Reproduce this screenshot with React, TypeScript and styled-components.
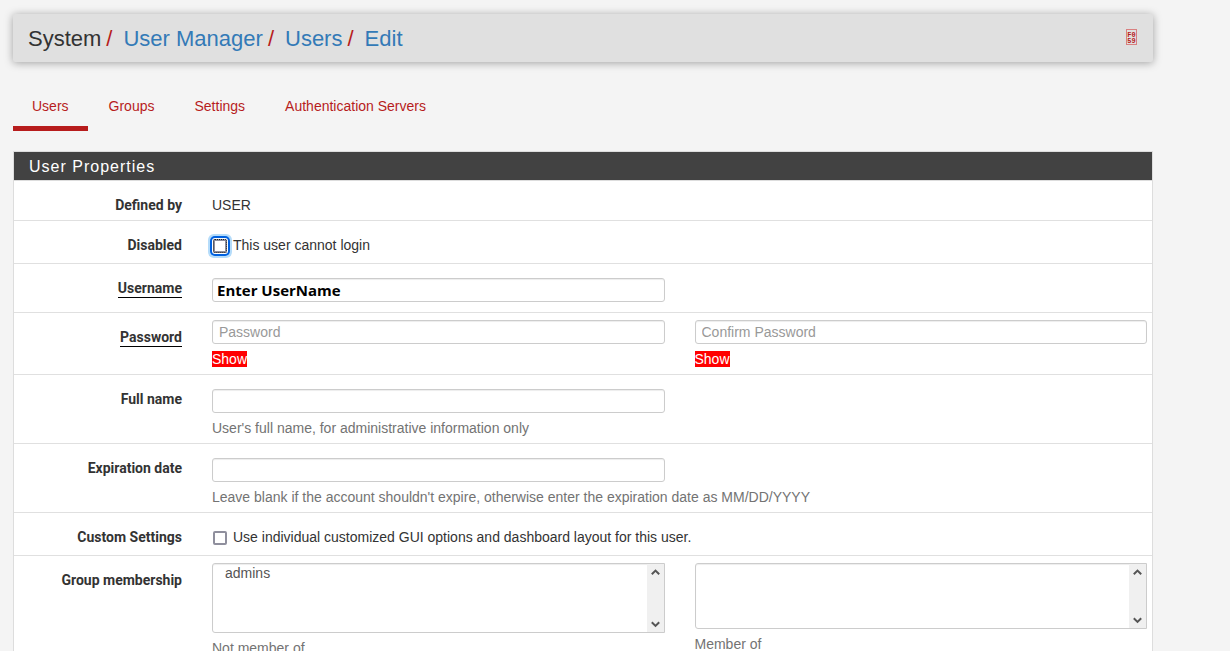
import React from "react";
import styled, { createGlobalStyle, css } from "styled-components";

const GlobalStyle = createGlobalStyle`
  *, *::before, *::after { box-sizing: border-box; }
  body {
    margin: 0;
    background: #f4f4f4;
    color: #333;
    font-family: "Liberation Sans", Arial, sans-serif;
    font-size: 14px;
    line-height: 20px;
  }
`;

const Page = styled.div`
  padding: 14px 77px 0 13px;
`;

const Header = styled.header`
  display: flex;
  align-items: center;
  justify-content: space-between;
  height: 48px;
  padding: 0 16px 0 15px;
  background: #e0e0e0;
  border-radius: 2px;
  box-shadow: 0 1px 8px rgba(0, 0, 0, 0.35);
`;

const Crumbs = styled.ol`
  display: flex;
  margin: 0;
  padding: 2px 0 0;
  list-style: none;
  font-size: 22px;
  line-height: 30px;
`;

const Crumb = styled.li`
  & + &::before {
    content: "/";
    margin: 0 11px 0 5px;
    color: #b71c1c;
  }
`;

const CrumbLink = styled.a`
  color: #337ab7;
  text-decoration: none;
`;

const HelpLink = styled.a`
  display: block;
  height: 18px;
`;

const Tabs = styled.nav`
  display: flex;
  gap: 2px;
  margin: 29px 0 20px;
`;

const Tab = styled.a<{ $active?: boolean }>`
  padding: 5px 19px 10px;
  border-bottom: 5px solid ${(p) => (p.$active ? "#b71c1c" : "transparent")};
  color: #b71c1c;
  text-decoration: none;
`;

const Panel = styled.section`
  background: #fff;
  border: 1px solid #ddd;
`;

const PanelTitle = styled.h2`
  margin: 0;
  padding: 5px 15px 3px;
  border-bottom: 1px solid #ddd;
  background: #424242;
  background-clip: padding-box;
  color: #fff;
  font-size: 16px;
  font-weight: 400;
  line-height: 20px;
  letter-spacing: 1px;
`;

const Row = styled.div<{ $bottom?: number }>`
  display: grid;
  grid-template-columns: 168px 1fr 1fr;
  column-gap: 30px;
  padding: 0 5px ${(p) => p.$bottom ?? 5}px 0;
  border-bottom: 1px solid #e0e0e0;
`;

const rowTitle = css`
  margin-top: 14px;
  justify-self: end;
  align-self: start;
  font-family: Roboto, sans-serif;
  font-weight: 700;
`;

const RowTitle = styled.span`
  ${rowTitle}
`;

const RowLabel = styled.label<{ $required?: boolean }>`
  ${rowTitle}
  line-height: ${(p) => (p.$required ? 18 : 20)}px;
  ${(p) => p.$required && "padding-top: 1px; border-bottom: 1px solid #000;"}
`;

const Field = styled.div<{ $tight?: boolean; $wide?: boolean }>`
  padding-top: ${(p) => (p.$tight ? 7 : 14)}px;
  ${(p) => p.$wide && "grid-column: 2 / -1;"}
`;

const HalfWidth = styled.div`
  display: grid;
  grid-template-columns: 1fr 1fr;
  column-gap: 30px;
`;

const frame = css`
  border: 1px solid #ccc;
  border-radius: 3px;
  background: #fff;
  box-shadow: inset 0 1px 1px rgba(0, 0, 0, 0.075);
`;

const TextInput = styled.input`
  ${frame}
  display: block;
  width: 100%;
  height: 24px;
  padding: 0 6px;
  color: #555;
  font: inherit;
  &::placeholder {
    color: #999;
    opacity: 1;
  }
`;

const UserNameInput = styled(TextInput)`
  padding: 0 4px;
  color: #000;
  font-family: "Open Sans", "Noto Sans", sans-serif;
  font-size: 15px;
  font-weight: 700;
`;

const Help = styled.p`
  margin: 5px 0 0;
  color: #737373;
`;

const ShowButton = styled.button`
  display: block;
  margin-top: 7px;
  padding: 0;
  border: 0;
  background: #f00;
  color: #fff;
  font: inherit;
  line-height: 16px;
`;

const CheckLabel = styled.label`
  display: flex;
  align-items: center;
  gap: 6px;
  width: fit-content;
`;

const CheckBox = styled.input<{ $focused?: boolean }>`
  appearance: none;
  width: 14px;
  height: 14px;
  margin: 2px 0 0 1px;
  border: 2px solid #8f8f9d;
  border-radius: 2px;
  background: #fff;
  ${(p) =>
    p.$focused &&
    css`
      outline: 1px dotted #222;
      outline-offset: -1px;
      box-shadow: 0 0 0 1px #fff, 0 0 0 3px #0061e0, 0 0 0 5px #b5dcfa;
    `}
`;

const ListFrame = styled.div<{ $height: number }>`
  ${frame}
  display: flex;
  height: ${(p) => p.$height}px;
  border-radius: 3px 0 0 3px;
`;

const List = styled.select`
  appearance: none;
  flex: 1;
  min-width: 0;
  padding: 0;
  border: 0;
  outline: 0;
  background: transparent;
  color: #555;
  font: inherit;
  overflow: hidden;
  & option {
    min-height: 18px;
    padding: 1px 12px 0;
    line-height: 18px;
  }
`;

const ScrollTrack = styled.div`
  display: flex;
  flex-direction: column;
  align-items: center;
  justify-content: space-between;
  width: 17px;
  padding: 5px 0 4px;
  background: #f0f0f0;
`;

const Arrow = ({ down }: { down?: boolean }) => (
  <svg width="9" height="7" viewBox="0 0 9 7" aria-hidden="true">
    <path
      d={down ? "M0.8 1.2 4.5 4.9 8.2 1.2" : "M0.8 5.3 4.5 1.6 8.2 5.3"}
      fill="none"
      stroke="#555"
      strokeWidth="2"
    />
  </svg>
);

const ListBox = ({ id, label, height, options }: { id: string; label: string; height: number; options: string[] }) => (
  <ListFrame $height={height}>
    <List id={id} multiple aria-label={label}>
      {options.map((name) => (
        <option key={name}>{name}</option>
      ))}
    </List>
    <ScrollTrack>
      <Arrow />
      <Arrow down />
    </ScrollTrack>
  </ListFrame>
);

const HelpIcon = () => (
  <svg width="11" height="16" viewBox="0 0 11 16" aria-hidden="true">
    <rect x="0.5" y="0.5" width="10" height="15" fill="none" stroke="#d98080" />
    <g fill="#b71c1c" fontFamily="Liberation Mono, monospace" fontSize="7" fontWeight="700" textAnchor="middle">
      <text x="5.5" y="8">F0</text>
      <text x="5.5" y="14">59</text>
    </g>
  </svg>
);

const tabs = ["Users", "Groups", "Settings", "Authentication Servers"];
const crumbs = ["User Manager", "Users", "Edit"];

export default function App() {
  return (
    <>
      <GlobalStyle />
      <Page>
        <Header>
          <Crumbs>
            <Crumb>System</Crumb>
            {crumbs.map((name) => (
              <Crumb key={name}>
                <CrumbLink href="#">{name}</CrumbLink>
              </Crumb>
            ))}
          </Crumbs>
          <HelpLink href="#" aria-label="Help">
            <HelpIcon />
          </HelpLink>
        </Header>
        <Tabs>
          {tabs.map((name, i) => (
            <Tab key={name} href="#" $active={i === 0}>
              {name}
            </Tab>
          ))}
        </Tabs>
        <Panel>
          <PanelTitle>User Properties</PanelTitle>
          <Row>
            <RowTitle>Defined by</RowTitle>
            <Field>USER</Field>
          </Row>
          <Row $bottom={8}>
            <RowLabel htmlFor="disabled">Disabled</RowLabel>
            <Field $wide>
              <CheckLabel>
                <CheckBox id="disabled" type="checkbox" $focused />
                This user cannot login
              </CheckLabel>
            </Field>
          </Row>
          <Row $bottom={10}>
            <RowLabel htmlFor="username" $required>Username</RowLabel>
            <Field>
              <UserNameInput id="username" type="text" defaultValue="Enter UserName" />
            </Field>
          </Row>
          <Row $bottom={7}>
            <RowLabel htmlFor="password" $required>Password</RowLabel>
            <Field $tight>
              <TextInput id="password" type="password" placeholder="Password" />
              <ShowButton type="button">Show</ShowButton>
            </Field>
            <Field $tight>
              <TextInput type="password" placeholder="Confirm Password" aria-label="Confirm Password" />
              <ShowButton type="button">Show</ShowButton>
            </Field>
          </Row>
          <Row>
            <RowLabel htmlFor="fullname">Full name</RowLabel>
            <Field>
              <TextInput id="fullname" type="text" />
              <Help>User's full name, for administrative information only</Help>
            </Field>
          </Row>
          <Row>
            <RowLabel htmlFor="expires">Expiration date</RowLabel>
            <Field $wide>
              <HalfWidth>
                <TextInput id="expires" type="text" />
              </HalfWidth>
              <Help>Leave blank if the account shouldn't expire, otherwise enter the expiration date as MM/DD/YYYY</Help>
            </Field>
          </Row>
          <Row $bottom={8}>
            <RowLabel htmlFor="custom">Custom Settings</RowLabel>
            <Field $wide>
              <CheckLabel>
                <CheckBox id="custom" type="checkbox" />
                Use individual customized GUI options and dashboard layout for this user.
              </CheckLabel>
            </Field>
          </Row>
          <Row>
            <RowLabel htmlFor="notmember">Group membership</RowLabel>
            <Field $tight>
              <ListBox id="notmember" label="Not member of" height={70} options={["admins"]} />
              <Help>Not member of</Help>
            </Field>
            <Field $tight>
              <ListBox id="member" label="Member of" height={66} options={[]} />
              <Help>Member of</Help>
            </Field>
          </Row>
        </Panel>
      </Page>
    </>
  );
}
